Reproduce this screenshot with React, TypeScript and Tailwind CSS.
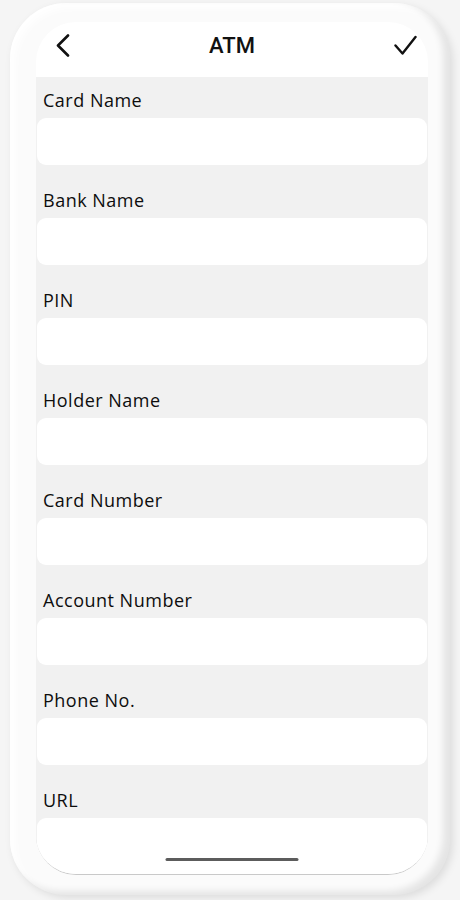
import React from 'react';

const fields = ['Card Name', 'Bank Name', 'PIN', 'Holder Name', 'Card Number', 'Account Number', 'Phone No.', 'URL'];

const BackIcon = () => (
  <svg width="14" height="23" viewBox="0 0 14 23" fill="none">
    <path d="M12 1.5 L2 11.5 L12 21.5" stroke="#111" strokeWidth="2.6" strokeLinecap="round" strokeLinejoin="round" />
  </svg>
);

const CheckIcon = () => (
  <svg width="23" height="21" viewBox="0 0 23 21" fill="none">
    <path d="M1.5 10.5 L8.5 18.5 L21.5 2" stroke="#111" strokeWidth="2.4" strokeLinecap="round" strokeLinejoin="round" />
  </svg>
);

const App: React.FC = () => {
  return (
    <div className="w-[460px] h-[900px] bg-[#f5f5f5] px-[10px] pt-[3px] pb-[5px] overflow-hidden">
      <div className="h-full rounded-[56px] bg-[#fbfbfb] pl-[26px] pr-[22px] pt-[19px] pb-[20px] shadow-[inset_-7px_-4px_7px_rgba(0,0,0,0.09),inset_5px_5px_8px_rgba(255,255,255,0.95),3px_3px_8px_rgba(0,0,0,0.10)]">
        <div className="relative h-full rounded-[40px] bg-white overflow-hidden flex flex-col border-b border-[#c9c9c9]">
          {/* header */}
          <header className="h-[55px] shrink-0 flex items-center justify-between pl-[20px] pr-[11px] pb-[8px]">
            <BackIcon />
            <h1 className="text-[22px] font-medium text-[#111] leading-none" style={{ fontFamily: 'Roboto, "Liberation Sans", sans-serif' }}>
              ATM
            </h1>
            <CheckIcon />
          </header>

          {/* form */}
          <div className="flex-1 bg-[#f1f1f1] px-[1px] pt-[11px] flex flex-col gap-[23px] overflow-hidden">
            {fields.map((f, i) => (
              <div key={f} className="flex flex-col gap-[6px]">
                <label
                  className="pl-[6px] text-[18px] leading-[24px] font-medium tracking-[0.5px] text-[#0d0d0d]"
                  style={{ fontFamily: '"Open Sans", "Noto Sans", sans-serif' }}
                >
                  {f}
                </label>
                <div className={`bg-white rounded-[9px] shrink-0 ${i === fields.length - 1 ? 'h-[90px]' : 'h-[47px]'}`} />
              </div>
            ))}
          </div>

          <div className="absolute bottom-[13px] left-1/2 -translate-x-1/2 w-[133px] h-[3px] rounded-full bg-[#5c5c5c]" />
        </div>
      </div>
    </div>
  );
};

export default App;
